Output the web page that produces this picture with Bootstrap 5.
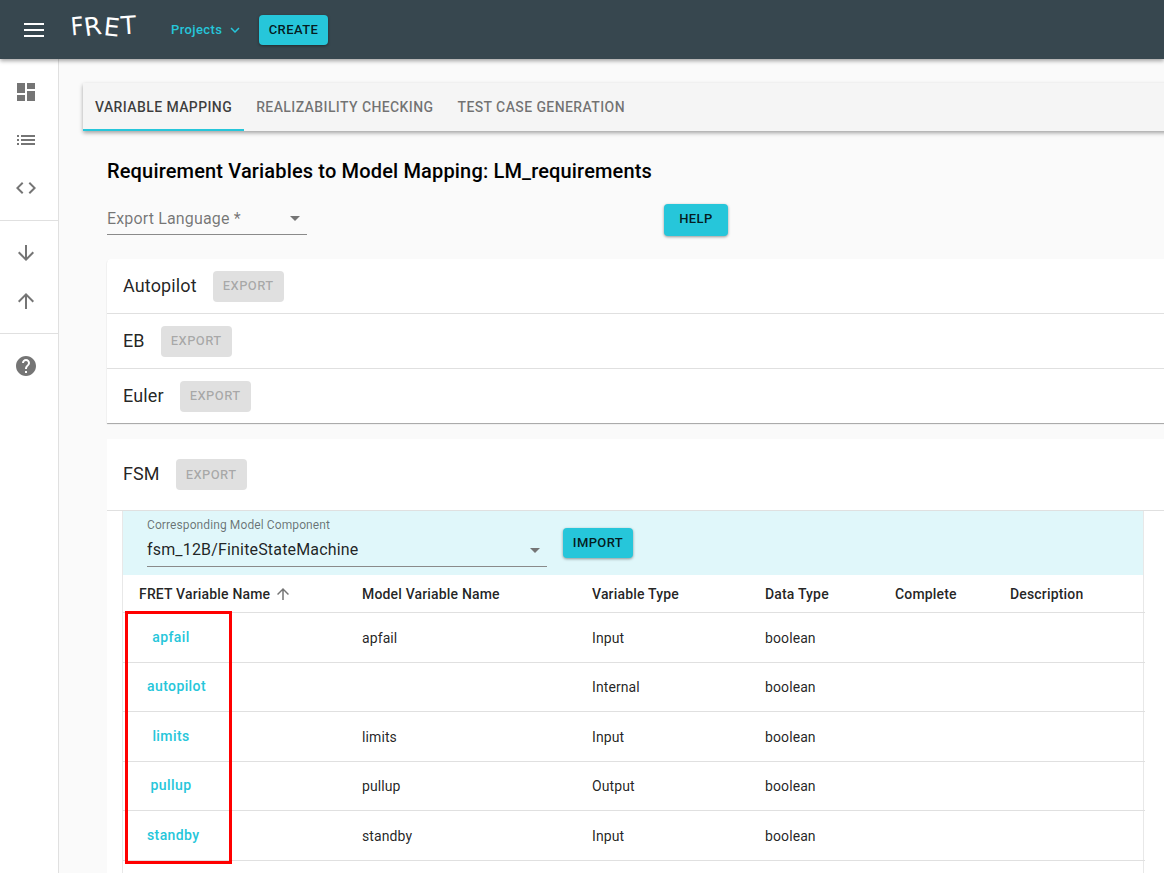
<!DOCTYPE html>
<html lang="en">
<head>
<meta charset="UTF-8">
<title>FRET</title>
<link rel="stylesheet" href="https://cdn.jsdelivr.net/npm/bootstrap@5.3.0/dist/css/bootstrap.min.css">
<style>
html, body { height: 873px; overflow: hidden; }
body { font-family: Roboto, "Liberation Sans", sans-serif; background: #fafafa; color: rgba(0,0,0,.87); }
.top-bar { height: 59px; background: #37474f; color: #fff; box-shadow: 0 2px 4px rgba(0,0,0,.35); position: relative; z-index: 5; padding-left: 24px; }
.logo-text { font-family: "DejaVu Sans", sans-serif; font-size: 25px; font-weight: 400; line-height: 30px; width: 66px; margin-left: 26px; margin-right: 35px; margin-top: -5px; white-space: nowrap; letter-spacing: 1px; }
.logo-text span { display: inline-block; }
.logo-text span:nth-child(1) { transform: rotate(-5deg) scaleX(.9); }
.logo-text span:nth-child(2) { transform: rotate(-8deg) translateX(-1px); }
.logo-text span:nth-child(3) { transform: rotate(6deg) translateY(1px); }
.logo-text span:nth-child(4) { transform: rotate(-4deg) translateY(-1px); }
.proj-link { color: #26c6da; font-size: 13px; font-weight: 500; letter-spacing: .4px; width: 88px; }
.teal-btn { background: #26c6da; color: rgba(0,0,0,.87); border: 0; border-radius: 4px; font-size: 13px; font-weight: 500; letter-spacing: .4px; line-height: 1; box-shadow: 0 1px 3px rgba(0,0,0,.4); padding: 0; }
.teal-btn.create { width: 69px; height: 30px; }
.teal-btn.help { width: 64px; height: 32px; margin-left: 357px; padding-bottom: 3px; }
.teal-btn.import { width: 70px; height: 30px; margin-left: 16px; margin-top: 10px; padding-bottom: 1px; }
.main-wrap { height: 814px; }
.side-rail { width: 59px; flex: none; background: #fff; border-right: 1px solid #e0e0e0; }
.rail-group { padding: 8px 0; border-bottom: 1px solid #e0e0e0; }
.rail-group:first-child { padding-top: 9px; }
.rail-group:last-child { border-bottom: 0; }
.rail-item { height: 48px; display: flex; align-items: center; justify-content: center; padding-right: 6px; }
.rail-item svg { width: 24px; height: 24px; fill: #757575; }
.content-area { width: 1105px; flex: none; padding: 24px 0 0 24px; overflow: hidden; }
.tab-strip { width: 1100px; height: 48px; background: #f5f5f5; box-shadow: 0 2px 4px rgba(0,0,0,.35); }
.tab-item { height: 48px; padding: 0 12px; line-height: 48px; font-size: 14px; font-weight: 500; letter-spacing: .4px; color: rgba(0,0,0,.54); white-space: nowrap; }
.tab-item.active { color: rgba(0,0,0,.75); border-bottom: 2px solid #26c6da; }
.page-body { padding: 0 0 0 24px; width: 1100px; }
.page-title { font-size: 20px; font-weight: 500; line-height: 28px; margin: 26px 0 0; color: #000; letter-spacing: .16px; }
.lang-row { margin-top: 19px; height: 31px; }
.lang-select { width: 200px; height: 31px; border-bottom: 1px solid #8a8a8a; color: rgba(0,0,0,.54); font-size: 16px; padding-bottom: 1px; letter-spacing: .15px; }
.caret-down { width: 0; height: 0; border-left: 5px solid transparent; border-right: 5px solid transparent; border-top: 5px solid #757575; margin-right: 7px; }
.export-stack { margin-top: 24px; width: 1060px; background: #fff; border-radius: 4px 0 0 0; box-shadow: 0 1px 1px rgba(0,0,0,.35); }
.export-row { height: 55px; padding-left: 16px; border-bottom: 1px solid #e0e0e0; font-size: 18px; letter-spacing: .13px; }
.export-row:last-child { border-bottom: 0; height: 54px; }
.row-name { margin-top: -2px; color: rgba(0,0,0,.87); }
.grey-btn { background: #e0e0e0; color: rgba(0,0,0,.26); border: 0; border-radius: 4px; font-size: 13px; font-weight: 500; letter-spacing: .4px; width: 71px; height: 31px; margin-left: 16px; padding: 0; }
.fsm-panel { margin-top: 16px; width: 1060px; background: #fff; }
.fsm-head { height: 72px; padding-left: 16px; border-bottom: 1px solid #e0e0e0; font-size: 18px; letter-spacing: .1px; }
.fsm-inner { margin-left: 15px; width: 1022px; position: relative; border-left: 1px solid #e8e8e8; border-right: 1px solid #e8e8e8; }
.model-bar { height: 64px; background: #e0f7fa; padding: 7px 0 0 24px; }
.model-label { font-size: 12px; color: rgba(0,0,0,.54); line-height: 14px; letter-spacing: .1px; }
.model-select { width: 400px; height: 34px; border-bottom: 1px solid #8a8a8a; font-size: 16px; color: rgba(0,0,0,.87); letter-spacing: .17px; margin-top: 1px; padding-top: 1px; }
.var-table { table-layout: fixed; width: 1022px; margin: 0; --bs-table-bg: transparent; }
.var-table th { font-size: 14px; font-weight: 500; height: 37.5px; padding: 1px 0 0 16px; vertical-align: middle; color: rgba(0,0,0,.87); border-bottom: 1px solid #e0e0e0; letter-spacing: .17px; }
.var-table td { font-size: 14px; height: 49.5px; padding: 2px 0 0 16px; vertical-align: middle; color: rgba(0,0,0,.87); border-bottom: 1px solid #e0e0e0; letter-spacing: .1px; }
.sort-arrow { width: 18px; height: 18px; fill: #757575; margin-left: 4px; vertical-align: -4px; }
.var-link { display: inline-block; min-width: 64px; padding: 0 8px; text-align: center; color: #26c6da; font-weight: 500; position: relative; top: -1px; letter-spacing: .4px; }
.red-box { position: absolute; left: 2px; top: 100px; width: 107px; height: 253px; border: 3px solid #f00; pointer-events: none; }
</style>
</head>
<body>
<div class="top-bar d-flex align-items-center">
    <svg width="20" height="14" viewBox="0 0 20 14" fill="#fff"><rect y="0" width="20" height="2"/><rect y="6" width="20" height="2"/><rect y="12" width="20" height="2"/></svg>
    <div class="logo-text"><span>F</span><span>R</span><span>E</span><span>T</span></div>
    <div class="proj-link d-flex align-items-center">Projects
        <svg class="ms-1" width="18" height="18" viewBox="0 0 24 24" fill="#26c6da"><path d="M7.41 8.59 12 13.17l4.59-4.58L18 10l-6 6-6-6z"/></svg>
    </div>
    <button class="teal-btn create">CREATE</button>
</div>

<div class="main-wrap d-flex">
    <div class="side-rail">
        <div class="rail-group">
            <div class="rail-item"><svg viewBox="0 0 24 24"><path d="M3 13h8V3H3v10zm0 8h8v-6H3v6zm10 0h8V11h-8v10zm0-18v6h8V3h-8z"/></svg></div>
            <div class="rail-item"><svg viewBox="0 0 24 24"><path d="M3 13h2v-2H3v2zm0 4h2v-2H3v2zm0-8h2V7H3v2zm4 4h14v-2H7v2zm0 4h14v-2H7v2zM7 7v2h14V7H7z"/></svg></div>
            <div class="rail-item"><svg viewBox="0 0 24 24"><path d="M9.4 16.6 4.8 12l4.6-4.6L8 6l-6 6 6 6 1.4-1.4zm5.2 0 4.6-4.6-4.6-4.6L16 6l6 6-6 6-1.4-1.4z"/></svg></div>
        </div>
        <div class="rail-group">
            <div class="rail-item"><svg viewBox="0 0 24 24"><path d="m20 12-1.41-1.41L13 16.17V4h-2v12.17l-5.58-5.59L4 12l8 8 8-8z"/></svg></div>
            <div class="rail-item"><svg viewBox="0 0 24 24"><path d="m4 12 1.41 1.41L11 7.83V20h2V7.83l5.58 5.59L20 12l-8-8-8 8z"/></svg></div>
        </div>
        <div class="rail-group">
            <div class="rail-item"><svg viewBox="0 0 24 24"><path d="M12 2C6.48 2 2 6.48 2 12s4.48 10 10 10 10-4.48 10-10S17.52 2 12 2zm1 17h-2v-2h2v2zm2.07-7.75-.9.92C13.45 12.9 13 13.5 13 15h-2v-.5c0-1.1.45-2.1 1.17-2.83l1.24-1.26c.37-.36.59-.86.59-1.41 0-1.1-.9-2-2-2s-2 .9-2 2H8c0-2.21 1.79-4 4-4s4 1.79 4 4c0 .88-.36 1.68-.93 2.25z"/></svg></div>
        </div>
    </div>

    <div class="content-area">
        <div class="tab-strip d-flex">
            <div class="tab-item active">VARIABLE MAPPING</div>
            <div class="tab-item">REALIZABILITY CHECKING</div>
            <div class="tab-item">TEST CASE GENERATION</div>
        </div>
        <div class="page-body">
            <h1 class="page-title">Requirement Variables to Model Mapping: LM_requirements</h1>
            <div class="lang-row d-flex">
                <div class="lang-select d-flex align-items-center justify-content-between">
                    <span>Export Language *</span><span class="caret-down"></span>
                </div>
                <button class="teal-btn help">HELP</button>
            </div>

            <div class="export-stack">
                <div class="export-row d-flex align-items-center"><span class="row-name">Autopilot</span><button class="grey-btn">EXPORT</button></div>
                <div class="export-row d-flex align-items-center"><span class="row-name">EB</span><button class="grey-btn">EXPORT</button></div>
                <div class="export-row d-flex align-items-center"><span class="row-name">Euler</span><button class="grey-btn">EXPORT</button></div>
            </div>

            <div class="fsm-panel">
                <div class="fsm-head d-flex align-items-center"><span class="row-name">FSM</span><button class="grey-btn">EXPORT</button></div>
                <div class="fsm-inner">
                    <div class="model-bar d-flex align-items-start">
                        <div>
                            <div class="model-label">Corresponding Model Component</div>
                            <div class="model-select d-flex align-items-center justify-content-between">
                                <span>fsm_12B/FiniteStateMachine</span><span class="caret-down"></span>
                            </div>
                        </div>
                        <button class="teal-btn import">IMPORT</button>
                    </div>
                    <table class="table var-table">
                        <colgroup><col style="width:223px"><col style="width:230px"><col style="width:173px"><col style="width:130px"><col style="width:115px"><col style="width:151px"></colgroup>
                        <thead>
                            <tr>
                                <th>FRET Variable Name<svg class="sort-arrow" viewBox="0 0 24 24"><path d="m4 12 1.41 1.41L11 7.83V20h2V7.83l5.58 5.59L20 12l-8-8-8 8z"/></svg></th>
                                <th>Model Variable Name</th><th>Variable Type</th><th>Data Type</th><th>Complete</th><th>Description</th>
                            </tr>
                        </thead>
                        <tbody>
                            <tr><td><span class="var-link">apfail</span></td><td>apfail</td><td>Input</td><td>boolean</td><td></td><td></td></tr>
                            <tr><td><span class="var-link">autopilot</span></td><td></td><td>Internal</td><td>boolean</td><td></td><td></td></tr>
                            <tr><td><span class="var-link">limits</span></td><td>limits</td><td>Input</td><td>boolean</td><td></td><td></td></tr>
                            <tr><td><span class="var-link">pullup</span></td><td>pullup</td><td>Output</td><td>boolean</td><td></td><td></td></tr>
                            <tr><td><span class="var-link">standby</span></td><td>standby</td><td>Input</td><td>boolean</td><td></td><td></td></tr>
                            <tr><td></td><td></td><td></td><td></td><td></td><td></td></tr>
                        </tbody>
                    </table>
                    <div class="red-box"></div>
                </div>
            </div>
        </div>
    </div>
</div>
<script src="https://cdn.jsdelivr.net/npm/bootstrap@5.3.0/dist/js/bootstrap.bundle.min.js"></script>
</body>
</html>
